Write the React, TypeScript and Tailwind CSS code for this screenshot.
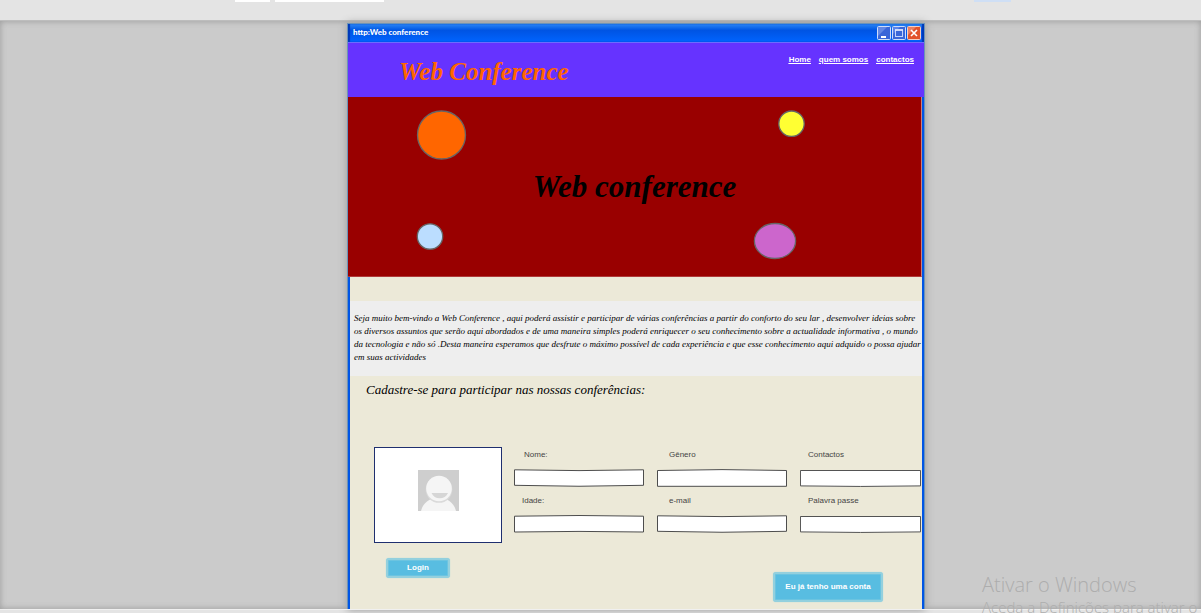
import type { ReactNode } from "react";

type FieldProps = {
  id: string;
  label: string;
  type?: string;
  outline: string;
  indent: string;
};

function Field({ id, label, type = "text", outline, indent }: FieldProps) {
  return (
    <div className="flex flex-col gap-2">
      <label htmlFor={id} className={`text-[8px] leading-3 text-[#444] ${indent}`}>
        {label}
      </label>
      <div className="relative h-[18px]">
        <svg
          className="absolute inset-0 h-full w-full"
          viewBox="0 0 130 18"
          preserveAspectRatio="none"
          aria-hidden="true"
        >
          <path d={outline} fill="#fff" stroke="#4d4d4d" strokeWidth="1" />
        </svg>
        <input
          id={id}
          type={type}
          className="relative block h-full w-full bg-transparent px-2 text-[8px] text-[#333] outline-none"
        />
      </div>
    </div>
  );
}

const BOW_IN = "M.5 .8Q65 2.4 129.5 .8V16.3Q65 18.2 .5 16.3Z";
const BOW_OUT = "M.5 1.5Q65 -.3 129.5 1.5V17.3H.5Z";
const BOW_FLAT = "M.5 1.5H129.5V16.9Q65 18 .5 16.9Z";
const BOW_LIFT = "M.5 1.2Q65 -.2 129.5 1.2V17Q65 15.8 .5 17Z";

function SkyButton({ children, size }: { children: ReactNode; size: string }) {
  return (
    <button
      type="button"
      className={`rounded-[3px] border-2 border-[#93d0de] bg-[#58bde1] text-[8px] font-bold leading-3 text-white shadow-[inset_0_0_0_1px_#6cc4e0,0_0_1px_#93d0de] ${size}`}
    >
      {children}
    </button>
  );
}

function TitleBar() {
  return (
    <div className="flex h-[19px] items-center justify-between border-b border-[#6d6cff] bg-linear-to-b from-[#2a85f5] via-[#0054e3] via-35% to-[#0064ff] pl-[5px] pr-[3px] shadow-[inset_2px_0_1px_#0038b8,inset_-2px_0_1px_#0038b8]">
      <span className="pb-0.5 font-['Lato','Open_Sans',sans-serif] text-[8px] font-black leading-3 text-white">
        http:Web conference
      </span>
      <div className="flex gap-px">
        <button type="button" aria-label="Minimizar" className="h-3.5 w-3.5">
          <svg viewBox="0 0 14 14" className="block h-full w-full">
            <rect x=".5" y=".5" width="13" height="13" rx="1" fill="#3a66d8" stroke="#cfdcfa" />
            <path d="M1 1H10L1 10Z" fill="#6488e4" />
            <rect x="4" y="10" width="5" height="2" fill="#fff" />
          </svg>
        </button>
        <button type="button" aria-label="Maximizar" className="h-3.5 w-3.5">
          <svg viewBox="0 0 14 14" className="block h-full w-full">
            <rect x=".5" y=".5" width="13" height="13" rx="1" fill="#3a66d8" stroke="#cfdcfa" />
            <path d="M1 1H8L1 8Z" fill="#5b84ea" />
            <rect x="3.5" y="4" width="7" height="6.500" fill="none" stroke="#c3d3fb" />
            <path d="M3 4H11" stroke="#e4ecff" strokeWidth="1.500" />
          </svg>
        </button>
        <button type="button" aria-label="Fechar" className="h-3.5 w-3.5">
          <svg viewBox="0 0 14 14" className="block h-full w-full">
            <rect x=".5" y=".5" width="13" height="13" rx="1" fill="#e2532c" stroke="#f6cfc2" />
            <path d="M1 1H9L1 9Z" fill="#ec8062" />
            <path d="M4 4L10 10M10 4L4 10" stroke="#fff" strokeWidth="1.600" />
          </svg>
        </button>
      </div>
    </div>
  );
}

function Avatar() {
  return (
    <svg viewBox="0 0 41 41" className="h-[41px] w-[41px]" role="img" aria-label="Fotografia">
      <rect width="41" height="41" fill="#cecece" />
      <path d="M3 41C5 33 11 28 20.500 28S36 33 38 41Z" fill="#f5f5f5" />
      <circle cx="21" cy="19.500" r="13.300" fill="#dadada" />
      <circle cx="21" cy="18.500" r="12.800" fill="#f5f5f5" />
      <path d="M13.500 23H30C28.500 26.500 25.500 28.300 21.700 28.300S15 26.500 13.500 23Z" fill="#d6d6d6" />
    </svg>
  );
}

export default function App() {
  return (
    <div className="relative flex min-h-screen flex-col overflow-hidden bg-[#e4e4e4] font-['Liberation_Sans',Arial,sans-serif]">
      <div className="flex h-[21px] items-start border-b border-[#bdbdbd]">
        <svg viewBox="0 0 1201 2" preserveAspectRatio="none" className="h-0.5 w-full" aria-hidden="true">
          <path d="M235 0H270V2H235ZM275 0H384V2H275Z" fill="#fff" />
          <path d="M974 0H1011V2H974Z" fill="#cfdff5" />
        </svg>
      </div>

      <main className="grid flex-1 grid-cols-[348fr_576fr_277fr] bg-[#cbcbcb] pt-[3px] shadow-[inset_0_0_6px_#999]">
        <div className="col-start-2 flex flex-col bg-[#ece9d8] shadow-[0_0_0_1px_#6b93b8,0_0_8px_1px_#999]">
          <TitleBar />
          <header className="flex h-[54px] items-start justify-between bg-[#6633ff] pl-[51px] pr-2.5">
            <h1 className="pt-3.5 font-['Liberation_Serif',serif] text-[25px] font-bold italic leading-[30px] text-[#ff6600]">
              Web Conference
            </h1>
            <nav className="flex gap-2 pt-[11px] text-[8px] font-bold leading-3 text-white underline">
              <a href="#home">Home</a>
              <a href="#quem-somos">quem somos</a>
              <a href="#contactos">contactos</a>
            </nav>
          </header>

          <div className="border-r-2 border-[#0055e5]">
            <section className="relative flex h-[180px] items-center justify-center border-b border-r border-b-[#b03a3a] border-r-[#c98080] bg-[#990000]">
              <svg
                viewBox="0 0 573 179"
                className="absolute inset-0 h-full w-full"
                stroke="#666"
                strokeWidth="1.300"
                aria-hidden="true"
              >
                <circle cx="93.500" cy="38" r="24" fill="#ff6600" />
                <circle cx="443.500" cy="26.700" r="12.700" fill="#ffff33" />
                <circle cx="82" cy="139.500" r="12.700" fill="#bbddff" />
                <ellipse cx="427" cy="144" rx="20.600" ry="17.500" fill="#cc66cc" />
              </svg>
              <h2 className="relative font-['Liberation_Serif',serif] text-[31px] font-bold italic leading-10 text-black">
                Web conference
              </h2>
            </section>
          </div>

          <div className="flex-1 border-x-2 border-[#0055e5] pt-6">
            <section className="bg-[#eeeeee] pb-3 pl-1 pt-[11px]">
              <p className="font-['Liberation_Serif',serif] text-[9px] italic leading-[13px] text-black">
                Seja muito bem-vindo a Web Conference , aqui poderá assistir e participar de várias
                conferências a partir do conforto do seu lar , desenvolver ideias sobre
                <br />
                os diversos assuntos que serão aqui abordados e de uma maneira simples poderá
                enriquecer o seu conhecimento sobre a actualidade informativa , o mundo
                <br />
                da tecnologia e não só .Desta maneira esperamos que desfrute o máximo possível de
                cada experiência e que esse conhecimento aqui adquido o possa ajudar
                <br />
                em suas actividades
              </p>
            </section>

            <section className="pt-1.5">
              <h3 className="pl-4 font-['Liberation_Serif',serif] text-[13px] italic leading-4 text-black">
                Cadastre-se para participar nas nossas conferências:
              </h3>
              <form className="pl-6 pr-px pt-[49px]">
                <div className="flex gap-3">
                  <div className="flex h-24 w-32 shrink-0 items-start justify-center border border-[#1f2f6f] bg-white pt-[22px]">
                    <Avatar />
                  </div>
                  <div className="grid flex-1 grid-cols-[130fr_130fr_121fr] content-start gap-x-[13px] gap-y-2 pt-0.5">
                    <Field id="nome" label="Nome:" outline={BOW_IN} indent="pl-2.5" />
                    <Field id="genero" label="Gênero" outline={BOW_OUT} indent="pl-3" />
                    <Field id="contactos" label="Contactos" type="tel" outline={BOW_FLAT} indent="pl-2" />
                    <Field id="idade" label="Idade:" outline={BOW_LIFT} indent="pl-2" />
                    <Field id="email" label="e-mail" type="email" outline={BOW_IN} indent="pl-3" />
                    <Field id="senha" label="Palavra passe" type="password" outline={BOW_FLAT} indent="pl-2" />
                  </div>
                </div>
                <div className="flex items-start justify-between pb-1.5 pl-3 pr-[38px] pt-[15px]">
                  <SkyButton size="h-5 w-16">Login</SkyButton>
                  <div className="pt-3.5">
                    <SkyButton size="h-[30px] w-[110px]">Eu já tenho uma conta</SkyButton>
                  </div>
                </div>
              </form>
            </section>
          </div>
        </div>
      </main>

      <div className="h-1 border-t border-[#f0f0f0]" />

      <div className="pointer-events-none absolute left-[982px] top-[573px] whitespace-nowrap font-['Open_Sans','Noto_Sans',sans-serif] text-[#adadad]">
        <p className="text-[20px] font-light leading-6">Ativar o Windows</p>
        <p className="text-[15px] font-light leading-5">Aceda a Definições para ativar o Windows.</p>
      </div>
    </div>
  );
}
